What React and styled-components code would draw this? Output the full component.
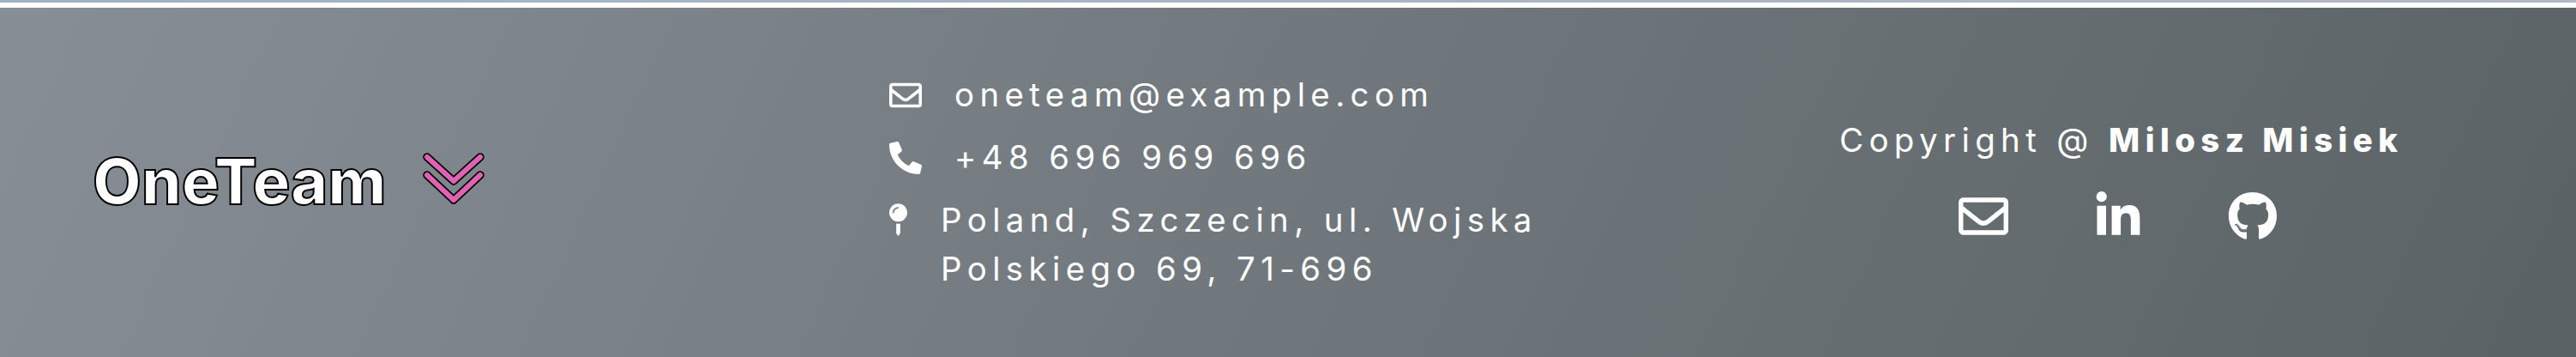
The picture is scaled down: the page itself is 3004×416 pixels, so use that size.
import React from "react";
import styled, { createGlobalStyle } from "styled-components";
import { FaRegEnvelope, FaPhoneAlt, FaMapPin, FaLinkedinIn, FaGithub } from "react-icons/fa";

const Global = createGlobalStyle`
  html, body { margin: 0; padding: 0; background: #fff; overflow: hidden; }
  body { font-family: "Inter", "Liberation Sans", sans-serif; }
`;

const Page = styled.div`
  display: flex;
  width: 3004px;
  height: 416px;
`;
const Main = styled.div`
  flex: 0 0 2992px;
  display: flex;
  flex-direction: column;
`;
const TopStrip = styled.div`
  height: 3px;
  margin-bottom: 6px;
  background: linear-gradient(90deg, #a0b3c2, #b0bac5);
`;
const Footer = styled.footer`
  flex: 1;
  display: grid;
  grid-template-columns: 927px 1110px 1fr;
  align-items: center;
  padding-left: 108px;
  color: #fff;
  font-size: 38.4px;
  line-height: 57.6px;
  letter-spacing: 6.4px;
  background: linear-gradient(115deg, #878e95 0%, #5b6265 100%);
`;
const Brand = styled.div`
  display: flex;
  align-items: center;
  gap: 42px;
`;
const Logo = styled.span`
  font-family: "Inter", "Liberation Sans", sans-serif;
  font-weight: 800;
  font-size: 73.6px;
  line-height: 1;
  letter-spacing: 0;
  margin-bottom: 2px;
  -webkit-text-stroke: 2px #000;
`;
const ChevronIcon = styled.svg`
  flex: none;
  margin-bottom: 6px;
`;
const Contacts = styled.ul`
  list-style: none;
  margin: 0;
  padding: 0;
  display: flex;
  flex-direction: column;
  gap: 15px;
`;
const Contact = styled.li`
  display: flex;
  align-items: ${(p) => (p.$top ? "flex-start" : "center")};
  gap: ${(p) => (p.$top ? "39px" : "38px")};
  max-width: 770px;
  & > svg {
    flex: none;
    margin-left: 2px;
    margin-top: ${(p) => (p.$top ? "9px" : "0")};
  }
`;
const Side = styled.div`
  display: flex;
  flex-direction: column;
  align-items: center;
  padding-right: 209px;
  padding-bottom: 8px;
  gap: 30px;
`;
const Copy = styled.p`
  margin: 0 4px 0 0;
  white-space: nowrap;
`;
const Name = styled.strong`
  font-weight: 800;
`;
const Socials = styled.div`
  display: flex;
  align-items: center;
  gap: 99px;
  height: 60px;
  margin-right: 12px;
`;
const Track = styled.div`
  flex: 0 0 12px;
  background: #fafafa;
  padding: 0 1px 12px 8px;
  border-left: 1px solid #ececec;
  box-sizing: border-box;
  display: flex;
`;
const Thumb = styled.div`
  flex: 1;
  background: #c1c1c1;
  border-radius: 0 0 3px 3px;
`;

const Chevrons = () => (
  <ChevronIcon width="72" height="64" viewBox="0 0 72 64" fill="none" strokeLinecap="round" strokeLinejoin="round" aria-hidden="true">
    <path d="M5 5 L36 33 L67 5" stroke="#000" strokeWidth="9.5" />
    <path d="M5 26 L36 55 L67 26" stroke="#000" strokeWidth="9.5" />
    <path d="M5 5 L36 33 L67 5" stroke="#e062b4" strokeWidth="6" />
    <path d="M5 26 L36 55 L67 26" stroke="#e062b4" strokeWidth="6" />
  </ChevronIcon>
);

export default function App() {
  return (
    <Page>
      <Global />
      <Main>
        <TopStrip />
        <Footer>
          <Brand>
            <Logo>OneTeam</Logo>
            <Chevrons />
          </Brand>
          <Contacts>
            <Contact><FaRegEnvelope size={38} />oneteam@example.com</Contact>
            <Contact><FaPhoneAlt size={38} />+48 696 969 696</Contact>
            <Contact $top><FaMapPin size={38} style={{ width: 21 }} /><span>Poland, Szczecin, ul. Wojska Polskiego 69, 71-696</span></Contact>
          </Contacts>
          <Side>
            <Copy>Copyright @ <Name>Milosz Misiek</Name></Copy>
            <Socials>
              <FaRegEnvelope size={58} />
              <FaLinkedinIn size={58} />
              <FaGithub size={58} />
            </Socials>
          </Side>
        </Footer>
      </Main>
      <Track><Thumb /></Track>
    </Page>
  );
}
